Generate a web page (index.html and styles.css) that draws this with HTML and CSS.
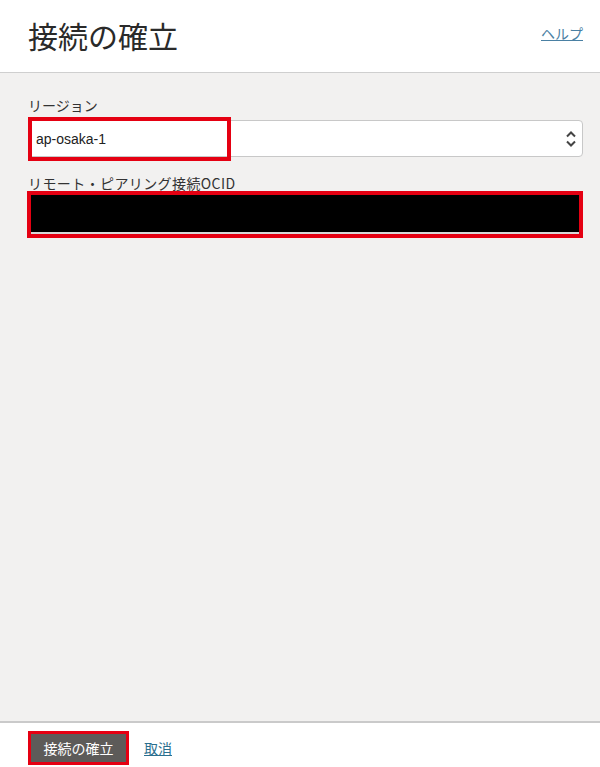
FILE: index.html
```html
<!DOCTYPE html>
<html lang="ja">
<head>
<meta charset="utf-8">
<title>接続の確立</title>
<link rel="stylesheet" href="styles.css">
</head>
<body>
<div class="page">
  <header class="header">
    <h1 class="title">接続の確立</h1>
    <a class="help" href="#">ヘルプ</a>
  </header>
  <main class="main">
    <div class="field">
      <label class="label">リージョン</label>
      <div class="select">
        <span class="select-value">ap-osaka-1</span>
        <svg class="select-arrow" width="12" height="20" viewBox="0 0 12 20"><path d="M2 7.5 L6 3.5 L10 7.5" fill="none" stroke="#444" stroke-width="2"/><path d="M2 12.5 L6 16.5 L10 12.5" fill="none" stroke="#444" stroke-width="2"/></svg>
        <div class="mark mark-region"></div>
      </div>
    </div>
    <div class="field field-ocid">
      <label class="label label-wide">リモート・ピアリング接続OCID</label>
      <div class="redacted"></div>
    </div>
  </main>
  <footer class="footer">
    <button class="btn-primary" type="button">接続の確立</button>
    <a class="cancel" href="#">取消</a>
  </footer>
</div>
</body>
</html>
```

FILE: styles.css
```css
* { box-sizing: border-box; }
html, body { margin: 0; padding: 0; }
body {
  font-family: "Noto Sans CJK JP", "Noto Sans", "Liberation Sans", sans-serif;
  color: #333;
  background: #f2f1f0;
}
.page {
  width: 600px;
  height: 767px;
  display: flex;
  flex-direction: column;
}
.header {
  height: 73px;
  flex: none;
  background: #fff;
  border-bottom: 1px solid #cfcfcf;
  display: flex;
  align-items: center;
  justify-content: space-between;
  padding: 0 17px 0 28px;
}
.title {
  margin: 0;
  font-size: 30px;
  font-weight: normal;
  color: #2a2a2a;
  line-height: 40px;
  margin-top: -2px;
}
.help {
  font-size: 14px;
  color: #4a80a3;
  text-decoration: underline;
  margin-top: -6px;
}
.main {
  flex: 1;
  padding: 22px 17px 0 28px;
}
.label {
  display: block;
  font-size: 14px;
  line-height: 20px;
  color: #333;
}
.label-wide { letter-spacing: 0.4px; }
.select {
  position: relative;
  margin-top: 5px;
  height: 37px;
  background: #fff;
  border: 1px solid #c8c8c8;
  border-radius: 4px;
  display: flex;
  align-items: center;
  justify-content: space-between;
  padding: 0 5px 0 7px;
}
.select-value {
  font-family: "Liberation Sans", "Noto Sans CJK JP", sans-serif;
  font-size: 14px;
  color: #222;
}
.select-arrow { display: block; }
.mark {
  position: absolute;
  border: 4px solid #e50012;
}
.mark-region {
  left: -1px;
  top: -4px;
  width: 203px;
  height: 44px;
}
.field-ocid { margin-top: 16px; }
.redacted {
  height: 47px;
  margin-top: -2px;
  margin-left: -1px;
  background: #000;
  border: 4px solid #e50012;
  box-shadow: inset 0 -2px 0 #d8d8d8;
}
.footer {
  flex: none;
  height: 46px;
  background: #fff;
  border-top: 2px solid #cacaca;
  display: flex;
  align-items: flex-start;
  padding: 8px 0 0 28px;
  gap: 15px;
}
.btn-primary {
  font-family: "Noto Sans CJK JP", sans-serif;
  font-size: 14px;
  color: #fff;
  background: #5d5b59;
  border: 3px solid #e50012;
  height: 34px;
  width: 101px;
  padding: 0;
  line-height: 26px;
}
.cancel {
  font-size: 14px;
  color: #2b6f8e;
  text-decoration: underline;
  line-height: 34px;
}
```
